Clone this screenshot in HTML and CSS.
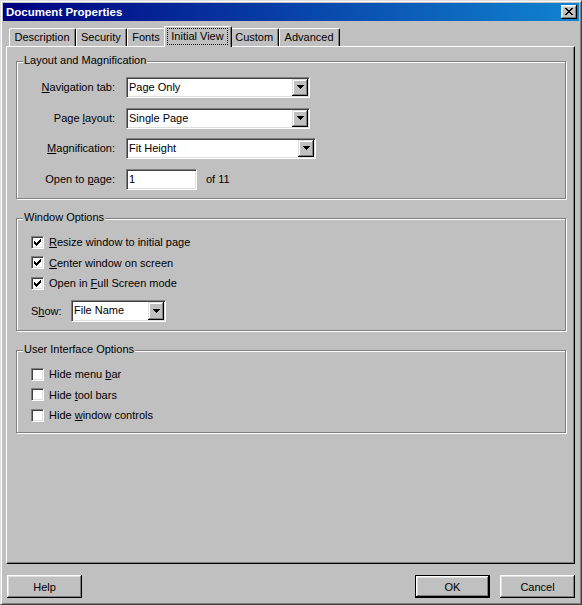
FILE: index.html
```html
<!DOCTYPE html>
<html lang="en">
<head>
<meta charset="utf-8">
<title>Document Properties</title>
<link rel="stylesheet" href="styles.css">
</head>
<body>
<div class="window">
  <div class="titlebar">
    <span class="title">Document Properties</span>
    <button class="close" type="button" aria-label="Close">
      <svg width="8" height="7" viewBox="0 0 8 7" shape-rendering="crispEdges"><path fill="#000" d="M0 0h2v1h-2z M6 0h2v1h-2z M1 1h2v1h-2z M5 1h2v1h-2z M2 2h4v1h-4z M3 3h2v1h-2z M2 4h4v1h-4z M1 5h2v1h-2z M5 5h2v1h-2z M0 6h2v1h-2z M6 6h2v1h-2z"/></svg>
    </button>
  </div>
  <div class="body">
    <div class="tabs">
      <div class="tab"><span class="tab-label">Description</span></div>
      <div class="tab"><span class="tab-label">Security</span></div>
      <div class="tab"><span class="tab-label">Fonts</span></div>
      <div class="tab active"><span class="tab-label">Initial View</span></div>
      <div class="tab"><span class="tab-label">Custom</span></div>
      <div class="tab"><span class="tab-label">Advanced</span></div>
    </div>
    <div class="panel">
      <div class="group g1">
        <div class="legend">Layout and Magnification</div>
        <div class="form">
          <span class="flabel"><u>N</u>avigation tab:</span>
          <div class="combo w184"><span class="combo-text">Page Only</span><span class="drop"><svg width="7" height="4" viewBox="0 0 7 4" shape-rendering="crispEdges"><path fill="#000" d="M0 0h7v1h-1v1h-1v1h-1v1h-1v-1h-1v-1h-1v-1h-1z"/></svg></span></div>
          <span class="flabel">Page <u>l</u>ayout:</span>
          <div class="combo w184"><span class="combo-text">Single Page</span><span class="drop"><svg width="7" height="4" viewBox="0 0 7 4" shape-rendering="crispEdges"><path fill="#000" d="M0 0h7v1h-1v1h-1v1h-1v1h-1v-1h-1v-1h-1v-1h-1z"/></svg></span></div>
          <span class="flabel"><u>M</u>agnification:</span>
          <div class="combo w190"><span class="combo-text">Fit Height</span><span class="drop"><svg width="7" height="4" viewBox="0 0 7 4" shape-rendering="crispEdges"><path fill="#000" d="M0 0h7v1h-1v1h-1v1h-1v1h-1v-1h-1v-1h-1v-1h-1z"/></svg></span></div>
          <span class="flabel">Open to <u>p</u>age:</span>
          <div class="inline"><span class="field">1</span><span class="after">of 11</span></div>
        </div>
      </div>

      <div class="group g2">
        <div class="legend">Window Options</div>
        <div class="checks">
          <div class="check"><span class="box"><svg width="7" height="7" viewBox="0 0 7 7" shape-rendering="crispEdges"><path fill="#000" d="M6 0h1v1h-1z M5 1h2v1h-2z M0 2h1v1h-1z M4 2h3v1h-3z M0 3h2v1h-2z M3 3h3v1h-3z M0 4h5v1h-5z M1 5h3v1h-3z M2 6h1v1h-1z"/></svg></span><span><u>R</u>esize window to initial page</span></div>
          <div class="check"><span class="box"><svg width="7" height="7" viewBox="0 0 7 7" shape-rendering="crispEdges"><path fill="#000" d="M6 0h1v1h-1z M5 1h2v1h-2z M0 2h1v1h-1z M4 2h3v1h-3z M0 3h2v1h-2z M3 3h3v1h-3z M0 4h5v1h-5z M1 5h3v1h-3z M2 6h1v1h-1z"/></svg></span><span><u>C</u>enter window on screen</span></div>
          <div class="check"><span class="box"><svg width="7" height="7" viewBox="0 0 7 7" shape-rendering="crispEdges"><path fill="#000" d="M6 0h1v1h-1z M5 1h2v1h-2z M0 2h1v1h-1z M4 2h3v1h-3z M0 3h2v1h-2z M3 3h3v1h-3z M0 4h5v1h-5z M1 5h3v1h-3z M2 6h1v1h-1z"/></svg></span><span>Open in <u>F</u>ull Screen mode</span></div>
        </div>
        <div class="show">
          <span class="show-label">S<u>h</u>ow:</span>
          <div class="combo w95 tall"><span class="combo-text">File Name</span><span class="drop"><svg width="7" height="4" viewBox="0 0 7 4" shape-rendering="crispEdges"><path fill="#000" d="M0 0h7v1h-1v1h-1v1h-1v1h-1v-1h-1v-1h-1v-1h-1z"/></svg></span></div>
        </div>
      </div>

      <div class="group g3">
        <div class="legend">User Interface Options</div>
        <div class="checks">
          <div class="check"><span class="box"></span><span>Hide menu <u>b</u>ar</span></div>
          <div class="check"><span class="box"></span><span>Hide <u>t</u>ool bars</span></div>
          <div class="check"><span class="box"></span><span>Hide <u>w</u>indow controls</span></div>
        </div>
      </div>
    </div>
    <div class="buttons">
      <button class="btn" type="button">Help</button>
      <span class="spacer"></span>
      <button class="btn default" type="button">OK</button>
      <button class="btn cancel" type="button">Cancel</button>
    </div>
  </div>
</div>
</body>
</html>
```
FILE: styles.css
```css
* { box-sizing: border-box; }
html, body { margin: 0; padding: 0; }
body {
  width: 582px;
  height: 605px;
  overflow: hidden;
  background: #c0c0c0;
  font-family: "Liberation Sans", Arial, sans-serif;
  font-size: 11px;
  color: #000;
}
.window {
  width: 582px;
  height: 605px;
  display: flex;
  flex-direction: column;
  background: #c0c0c0;
  border: 1px solid;
  border-color: #dfdfdf #404040 #404040 #dfdfdf;
  box-shadow: inset 1px 1px 0 #fff, inset -1px -1px 0 #808080;
  padding: 2px;
}
.titlebar {
  height: 18px;
  flex: none;
  display: flex;
  align-items: center;
  justify-content: space-between;
  padding: 0 2px 0 3px;
  background: linear-gradient(to right, #000080, #1084d0);
  color: #fff;
}
.title {
  font-weight: bold;
  font-size: 11.5px;
  line-height: 14px;
}
.close {
  width: 16px;
  height: 14px;
  padding: 0 0 1px 0;
  border: 0;
  background: #c0c0c0;
  box-shadow: inset -1px -1px 0 #000, inset 1px 1px 0 #fff, inset -2px -2px 0 #808080, inset 2px 2px 0 #dfdfdf;
  display: flex;
  align-items: center;
  justify-content: center;
}
.close svg, .drop svg, .box svg { display: block; }
.body {
  flex: 1;
  display: flex;
  flex-direction: column;
  padding: 0 4px 0 3px;
}
.tabs {
  height: 25px;
  flex: none;
  display: flex;
  align-items: flex-end;
  padding-left: 3px;
}
.tab {
  height: 18px;
  background: #c0c0c0;
  border: 1px solid #fff;
  border-bottom: 0;
  border-right-color: #000;
  border-radius: 2px 2px 0 0;
  box-shadow: inset -1px 0 0 #808080;
  padding: 0 1px 0 0;
}
.tab-label {
  display: block;
  line-height: 13px;
  padding: 1px 3px 1px 3.5px;
  border: 1px dotted transparent;
  white-space: nowrap;
}
.tab.active {
  height: 21px;
  margin: 0 -2px -1px;
  padding: 1px 3px 0 2px;
  z-index: 1;
}
.tab.active .tab-label { border-color: #000; }
.panel {
  flex: none;
  height: 518px;
  border: 1px solid;
  border-color: #fff #000 #000 #fff;
  box-shadow: inset -1px -1px 0 #808080;
  padding: 14px 8px 0 9px;
}
.group {
  display: flex;
  flex-direction: column;
  align-items: flex-start;
  border: 1px solid #808080;
  box-shadow: inset 1px 1px 0 #fff, 1px 1px 0 #fff;
}
.legend {
  margin: -8px 0 0 6px;
  padding: 0 1px;
  line-height: 13px;
  background: #c0c0c0;
}
.g1 { padding-bottom: 8.5px; }
.g2 { margin-top: 19px; padding-bottom: 8px; }
.g3 { margin-top: 19px; padding-bottom: 6.5px; }
.form {
  display: grid;
  grid-template-columns: 98px auto;
  column-gap: 11px;
  row-gap: 9.5px;
  margin-top: 10px;
  align-items: center;
}
.flabel {
  justify-self: end;
  line-height: 13px;
  white-space: nowrap;
}
.combo {
  height: 21px;
  display: flex;
  background: #fff;
  border: 1px solid;
  border-color: #808080 #fff #fff #808080;
  box-shadow: inset 1px 1px 0 #404040, inset -1px -1px 0 #dfdfdf;
  padding: 1px;
}
.combo.tall { height: 22px; }
.w184 { width: 184px; }
.w190 { width: 190px; }
.w95 { width: 95px; }
.combo-text {
  flex: 1;
  padding-left: 1px;
  line-height: 17px;
  white-space: nowrap;
}
.drop {
  width: 16px;
  flex: none;
  background: #c0c0c0;
  box-shadow: inset -1px -1px 0 #000, inset 1px 1px 0 #dfdfdf, inset -2px -2px 0 #808080, inset 2px 2px 0 #fff;
  display: flex;
  align-items: center;
  justify-content: center;
  padding-bottom: 1px;
}
.inline {
  display: flex;
  align-items: center;
}
.field {
  width: 71px;
  height: 21px;
  background: #fff;
  border: 1px solid;
  border-color: #808080 #fff #fff #808080;
  box-shadow: inset 1px 1px 0 #404040, inset -1px -1px 0 #dfdfdf;
  padding: 1px 2px;
  line-height: 17px;
}
.after { margin-left: 9px; }
.checks {
  margin-top: 8px;
  display: flex;
  flex-direction: column;
}
.check {
  height: 20.5px;
  display: flex;
  align-items: center;
  gap: 5px;
  padding-left: 14px;
  white-space: nowrap;
}
.box {
  width: 13px;
  height: 13px;
  flex: none;
  background: #fff;
  border: 1px solid;
  border-color: #808080 #fff #fff #808080;
  box-shadow: inset 1px 1px 0 #404040, inset -1px -1px 0 #dfdfdf;
  padding: 2px;
}
.show {
  display: flex;
  align-items: center;
  padding-left: 14px;
  margin-top: 6.5px;
}
.show-label { width: 40px; }
.buttons {
  display: flex;
  margin-top: 11px;
  padding-left: 1px;
}
.spacer { flex: 1; }
.btn {
  width: 75px;
  height: 23px;
  padding: 0;
  border: 0;
  font: inherit;
  color: #000;
  background: #c0c0c0;
  box-shadow: inset -1px -1px 0 #000, inset 1px 1px 0 #fff, inset -2px -2px 0 #808080, inset 2px 2px 0 #dfdfdf;
}
.btn.default {
  box-shadow: inset 0 0 0 1px #000, inset -2px -2px 0 #000, inset 2px 2px 0 #fff, inset -3px -3px 0 #808080, inset 3px 3px 0 #dfdfdf;
}
.btn.cancel { margin-left: 10px; }
```
